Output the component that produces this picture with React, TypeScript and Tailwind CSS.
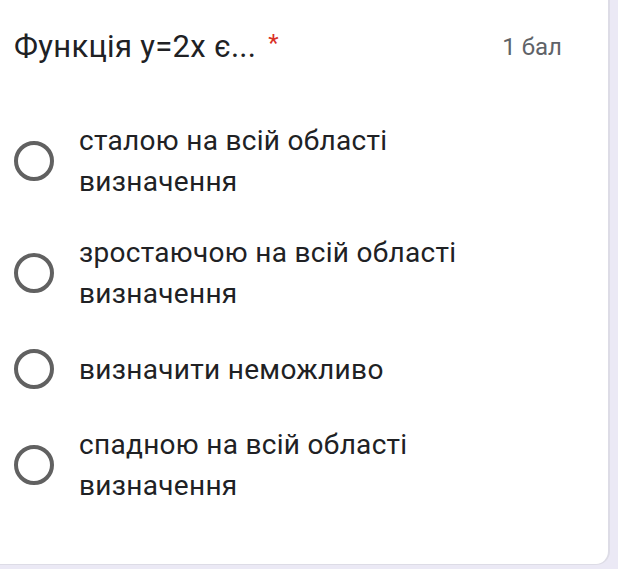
import React from 'react';

const options = [
  'сталою на всій області визначення',
  'зростаючою на всій області визначення',
  'визначити неможливо',
  'спадною на всій області визначення',
];

export default function App() {
  return (
    <div className="flex w-[618px] h-[569px] bg-[#ebe9f5] overflow-hidden font-['Roboto',sans-serif]">
      <div className="w-[610px] h-[565px] shrink-0 bg-white border-r-2 border-b border-[#dddce6] rounded-br-[14px]">
        {/* Header */}
        <div className="flex items-center justify-between pt-[30px] pl-[14px] pr-[46px]">
          <h1 className="flex items-start text-[31px] leading-[34px] tracking-[0.3px] text-[#202124]">
            Функція у=2х є...
            <span className="text-[24px] leading-[24px] text-[#d93025] ml-[12px] mt-[1px]">*</span>
          </h1>
          <span className="text-[24px] leading-[30px] text-[#5f6368]">1 бал</span>
        </div>

        {/* Options */}
        <div className="mt-[56px] flex flex-col gap-[30px] pl-[14px]">
          {options.map((opt) => (
            <div key={opt} className="flex items-center">
              <div className="w-[40px] h-[40px] shrink-0 rounded-full border-[4px] border-[#616161]" />
              <div className="ml-[25px] max-w-[430px] min-h-[50px] flex items-center text-[28px] leading-[41px] text-[#202124] tracking-[0.3px]">
                {opt}
              </div>
            </div>
          ))}
        </div>
      </div>
    </div>
  );
}
